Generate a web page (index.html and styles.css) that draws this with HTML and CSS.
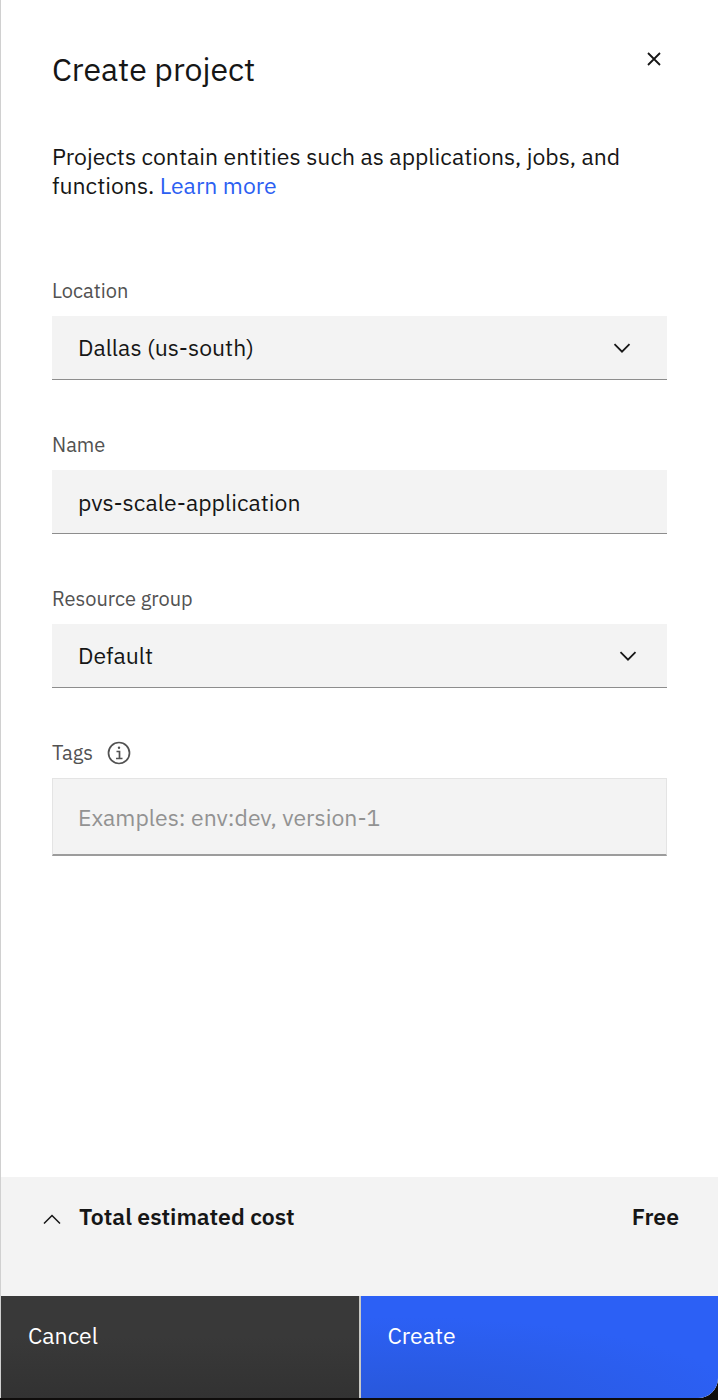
FILE: index.html
```html
<!DOCTYPE html>
<html lang="en">
<head>
<meta charset="utf-8">
<meta name="viewport" content="width=device-width, initial-scale=1">
<title>Create project</title>
<link rel="stylesheet" href="styles.css">
</head>
<body>
<form class="panel">
  <header class="panel-header">
    <h1 class="title">Create project</h1>
    <button class="close" type="button" aria-label="Close">
      <svg class="close-icon" viewBox="0 0 14 14" aria-hidden="true"><path d="M1 1 13 13M13 1 1 13"/></svg>
    </button>
  </header>
  <p class="intro">Projects contain entities such as applications, jobs, and functions. <a class="link" href="#">Learn more</a></p>
  <div class="fields">
    <div class="field">
      <label class="label" for="location">Location</label>
      <div class="select-wrap">
        <select class="control" id="location"><option>Dallas (us-south)</option></select>
        <svg class="chevron chevron-inset" viewBox="0 0 18 10" aria-hidden="true"><path d="M1.5 1.2 9 8.7 16.5 1.2"/></svg>
      </div>
    </div>
    <div class="field">
      <label class="label" for="name">Name</label>
      <input class="control" id="name" type="text" value="pvs-scale-application">
    </div>
    <div class="field">
      <label class="label" for="group">Resource group</label>
      <div class="select-wrap">
        <select class="control" id="group"><option>Default</option></select>
        <svg class="chevron" viewBox="0 0 18 10" aria-hidden="true"><path d="M1.5 1.2 9 8.7 16.5 1.2"/></svg>
      </div>
    </div>
    <div class="field">
      <div class="label-row">
        <label class="label" for="tags">Tags</label>
        <button class="info" type="button" aria-label="About tags">
          <svg class="info-icon" viewBox="0 0 24 24" aria-hidden="true"><circle cx="12" cy="12" r="10.5"/><path d="M9.5 10.5H12.5V17.3M9 17.5H15.5"/><circle class="info-dot" cx="12" cy="6.7" r="1.2"/></svg>
        </button>
      </div>
      <input class="control control-tags" id="tags" type="text" placeholder="Examples: env:dev, version-1">
    </div>
  </div>
  <footer class="footer">
    <div class="cost">
      <button class="cost-toggle" type="button" aria-expanded="false">
        <svg class="cost-icon" viewBox="0 0 18 10" aria-hidden="true"><path d="M1 9.5 9 1.5 17 9.5"/></svg>
        <span>Total estimated cost</span>
      </button>
      <span>Free</span>
    </div>
    <div class="actions">
      <button class="action cancel" type="button">Cancel</button>
      <button class="action create" type="submit">Create</button>
    </div>
  </footer>
</form>
</body>
</html>
```

FILE: styles.css
```css
* {
  box-sizing: border-box;
}

body {
  margin: 0;
  background: #0e0c0b;
  color: #161616;
  font-family: "IBM Plex Sans", Roboto, "Liberation Sans", sans-serif;
  font-size: 23px;
  line-height: 29px;
}

button,
input,
select {
  font: inherit;
  color: inherit;
}

button {
  padding: 0;
  border: 0;
  background: none;
  cursor: pointer;
}

svg {
  display: block;
  fill: none;
  stroke: #161616;
  stroke-width: 1.8;
}

.panel {
  display: flex;
  flex-direction: column;
  min-height: calc(100vh - 2px);
  margin-bottom: 2px;
  border-left: 1px solid #d0d0d0;
  border-bottom-right-radius: 20px;
  background: #fff;
  overflow: hidden;
}

.panel-header {
  display: flex;
  justify-content: space-between;
  align-items: flex-start;
  padding: 47px 50px 0 51px;
}

.title {
  margin: 0;
  font-size: 32px;
  line-height: 44px;
  font-weight: 400;
}

.close {
  display: grid;
  place-items: center;
  width: 28px;
  height: 24px;
}

.close-icon {
  width: 14px;
  height: 14px;
}

.intro {
  margin: 51px 90px 0 51px;
}

.link {
  color: #2c60f2;
  text-decoration: none;
}

.fields {
  display: flex;
  flex-direction: column;
  gap: 53px;
  padding: 79px 51px 48px;
}

.label-row {
  display: flex;
  align-items: center;
  gap: 14px;
}

.label {
  display: block;
  font-size: 20px;
  line-height: 24px;
  color: #525252;
}

.info-icon {
  width: 24px;
  height: 24px;
  stroke: #525252;
  stroke-width: 1.7;
}

.info .info-dot {
  fill: #525252;
  stroke: none;
}

.control {
  display: block;
  width: 100%;
  height: 64px;
  margin: 13px 0 0;
  padding: 0 26px;
  border: 0;
  border-bottom: 1px solid #8d8d8d;
  border-radius: 0;
  background: #f3f3f3;
  appearance: none;
}

.control-tags {
  height: 78px;
  border: 1px solid #e4e4e4;
  border-bottom: 2px solid #9c9c9c;
  padding: 0 25px;
}

.control::placeholder {
  color: #929292;
  opacity: 1;
}

.select-wrap {
  position: relative;
}

.chevron {
  position: absolute;
  right: 30px;
  top: 27px;
  width: 18px;
  height: 10px;
  pointer-events: none;
}

.chevron-inset {
  right: 36px;
}

.footer {
  margin-top: auto;
}

.cost {
  display: flex;
  justify-content: space-between;
  align-items: flex-start;
  min-height: 119px;
  padding: 25px 39px 0 42px;
  background: #f3f3f3;
  font-weight: 600;
}

.cost-toggle {
  display: flex;
  align-items: center;
  gap: 18px;
}

.cost-icon {
  width: 18px;
  height: 10px;
  margin-top: 4px;
  stroke-width: 1.5;
}

.actions {
  display: grid;
  grid-template-columns: 1fr 1fr;
  gap: 2px;
  background: #c8c8c4;
}

.action {
  display: flex;
  align-items: flex-start;
  height: 102px;
  padding: 25px 27px;
  color: #fff;
}

.cancel {
  background: linear-gradient(#393939 40%, #323232);
}

.create {
  background: radial-gradient(ellipse 100% 90% at 10% 110%, #2857d8, #2c60f5);
}
```
